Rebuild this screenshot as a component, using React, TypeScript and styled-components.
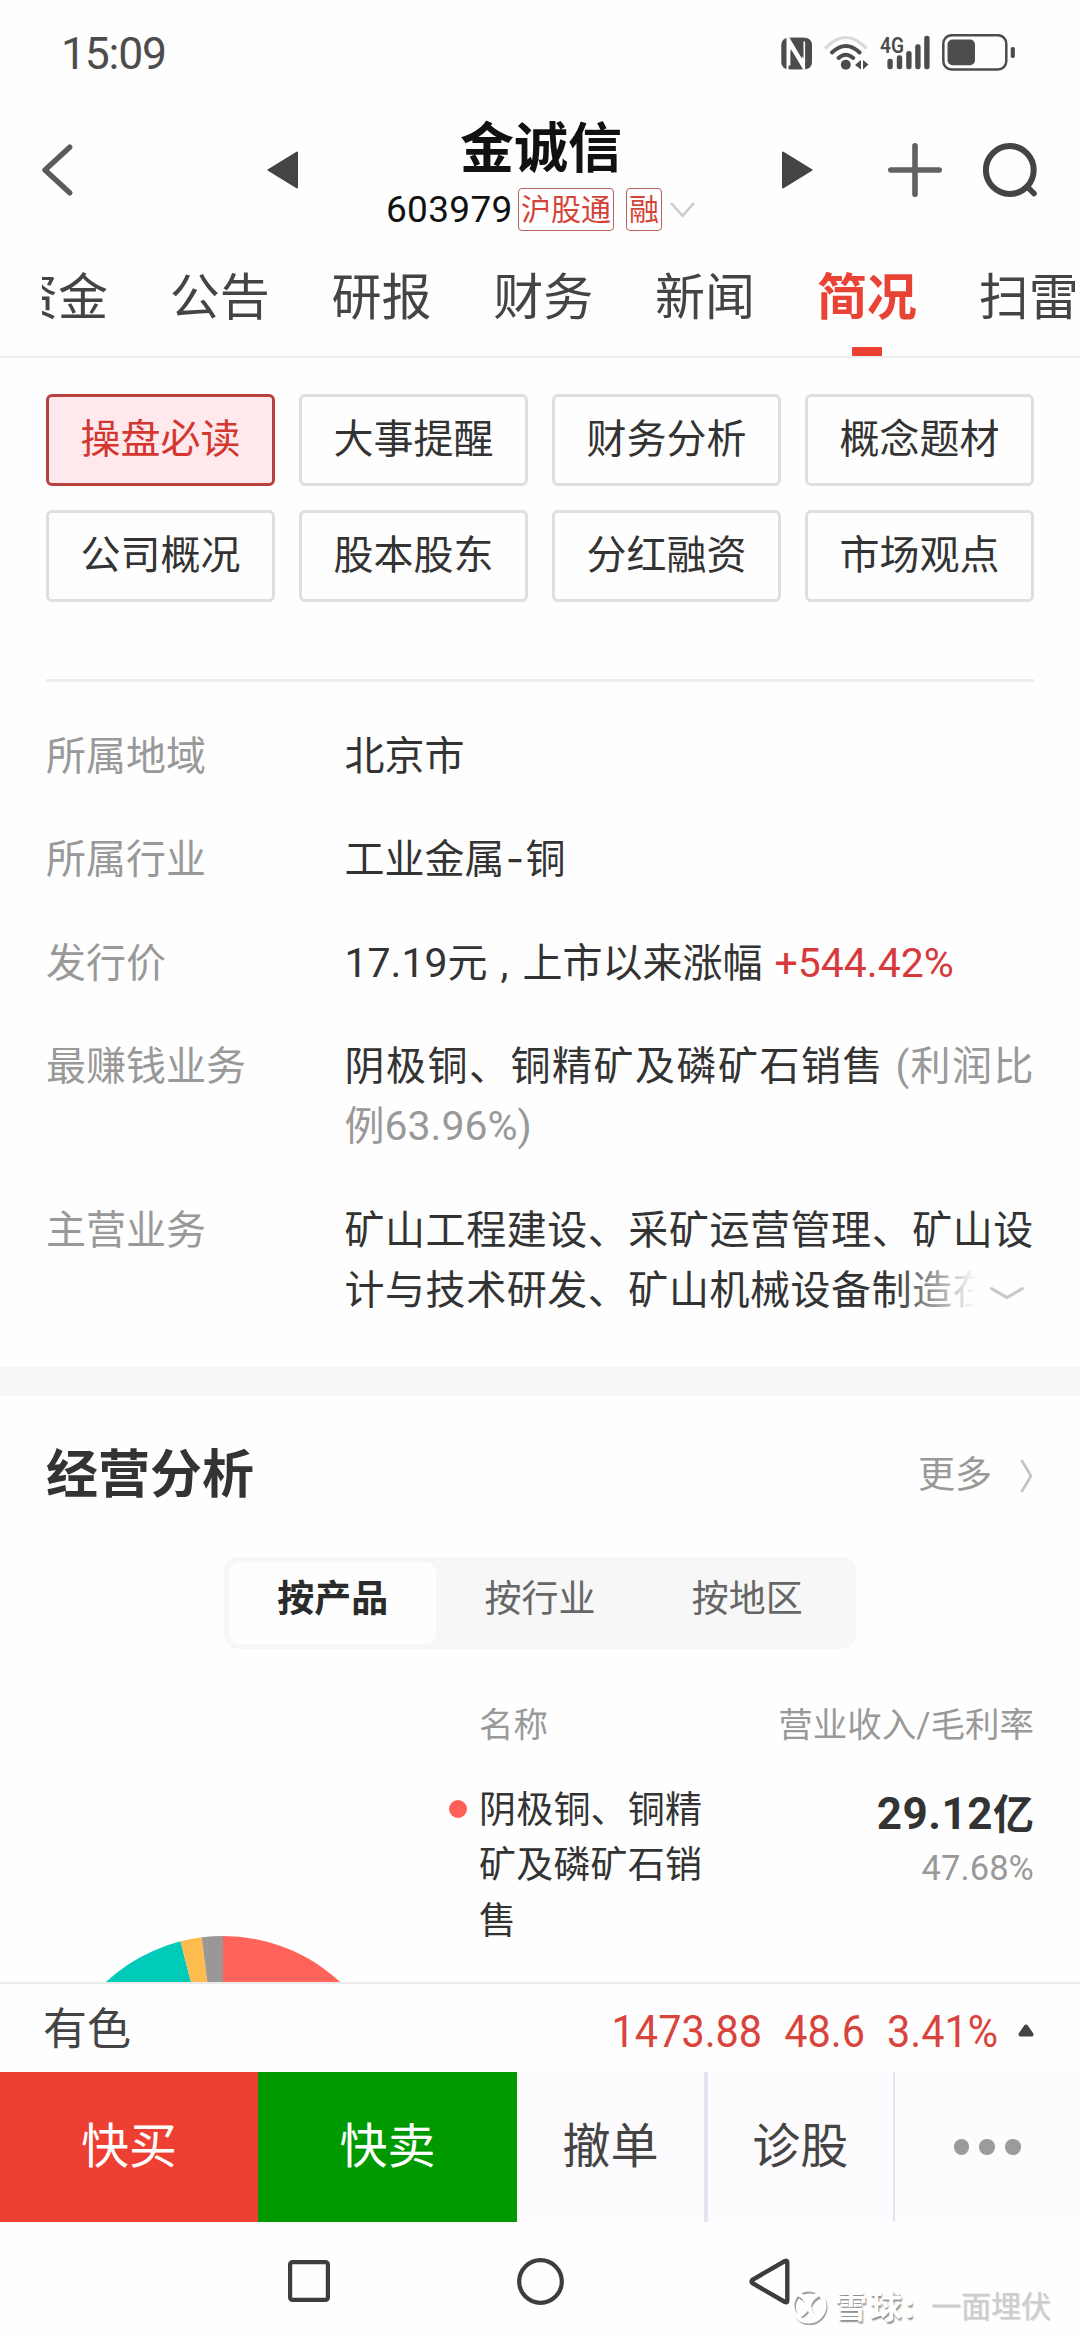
import React from "react";
import styled, { createGlobalStyle } from "styled-components";

const GlobalStyle = createGlobalStyle`
  * { box-sizing: border-box; }
  body {
    margin: 0;
    background: #fefefe;
    font-family: Roboto, "Noto Sans CJK SC", sans-serif;
    color: #333;
  }
  svg { display: block; flex: none; }
`;

const Screen = styled.div`
  width: 1080px;
  height: 2340px;
  display: flex;
  flex-direction: column;
  overflow: hidden;
  background: #fefefe;
`;

/* status bar */
const StatusBar = styled.div`
  height: 107px;
  flex: none;
  display: flex;
  align-items: center;
  justify-content: space-between;
  padding: 0 65px 0 61px;
`;
const Clock = styled.div`
  font-size: 44.5px;
  line-height: 50px;
  letter-spacing: -1.2px;
  color: #4c4c4c;
`;

/* header */
const Header = styled.header`
  height: 126px;
  flex: none;
  display: flex;
  align-items: center;
  padding-left: 42px;
`;
const IconButton = styled.div<{ $before?: number }>`
  flex: none;
  margin-left: ${(p) => p.$before ?? 0}px;
`;
const Quote = styled.div`
  align-self: flex-start;
  width: 310px;
  margin-left: 88px;
  padding-top: 10px;
`;
const StockName = styled.h1`
  margin: 0;
  text-align: center;
  font-size: 54px;
  font-weight: 700;
  line-height: 66px;
  color: #111;
`;
const CodeRow = styled.div`
  display: flex;
  align-items: center;
  height: 43px;
  margin-top: 5px;
`;
const Code = styled.span`
  width: 132px;
  font-size: 37px;
  line-height: 43px;
  letter-spacing: 0.3px;
  color: #111;
  white-space: nowrap;
`;
const Badge = styled.span<{ $width: number }>`
  width: ${(p) => p.$width}px;
  height: 43px;
  margin-right: 12px;
  border: 1.5px solid #b8605c;
  border-radius: 4px;
  font-size: 30px;
  line-height: 41px;
  text-align: center;
  white-space: nowrap;
  color: #d5443b;
`;
const BadgeChevron = styled.svg`
  margin-left: -4px;
`;

/* tabs */
const Tabs = styled.nav`
  flex: none;
  height: 125px;
  padding-left: 42px;
  border-bottom: 2px solid #eeeeee;
`;
const TabTrack = styled.div`
  display: flex;
  height: 123px;
  overflow: hidden;
`;
const Tab = styled.div<{ $active?: boolean; $first?: boolean }>`
  flex: none;
  width: 161.8px;
  margin-left: ${(p) => (p.$first ? -65 : 0)}px;
  padding-top: 35px;
  display: flex;
  flex-direction: column;
  align-items: center;
  justify-content: space-between;
  font-size: 50px;
  line-height: 60px;
  font-weight: ${(p) => (p.$active ? 700 : 400)};
  color: ${(p) => (p.$active ? "#e94335" : "#444")};
`;
const Indicator = styled.i`
  width: 30px;
  height: 9px;
  border-radius: 1px;
  background: #ec4034;
`;

/* profile section */
const Profile = styled.section`
  flex: none;
  padding: 36px 46px 46px;
`;
const ChipGrid = styled.div`
  display: grid;
  grid-template-columns: repeat(4, 229px);
  grid-auto-rows: 92px;
  gap: 24px;
`;
const Chip = styled.div<{ $active?: boolean }>`
  display: flex;
  justify-content: center;
  align-items: center;
  border: 3px solid ${(p) => (p.$active ? "#b8413f" : "#dfdfdf")};
  border-radius: 6px;
  background: ${(p) => (p.$active ? "#ffe9ed" : "#fefefe")};
  font-size: 40px;
  line-height: 60px;
  color: ${(p) => (p.$active ? "#d4372f" : "#333")};
`;
const Divider = styled.hr`
  height: 3px;
  margin: 77px 0 45px;
  border: 0;
  background: #ededed;
`;
const InfoList = styled.dl`
  margin: 0;
  display: flex;
  flex-direction: column;
  gap: 43.4px;
`;
const InfoRow = styled.div`
  display: flex;
  font-size: 40px;
  line-height: 60px;
`;
const Term = styled.dt`
  flex: none;
  width: 298.5px;
  color: #999;
`;
const Detail = styled.dd`
  position: relative;
  flex: 1;
  margin: 0;
  white-space: nowrap;
`;
const Line = styled.div<{ $tracking?: number }>`
  height: 60px;
  letter-spacing: ${(p) => p.$tracking ?? 0}px;
`;
const Num = styled.span`
  font-size: 41px;
  line-height: 1;
`;
const Dash = styled.span`
  display: inline-block;
  width: 21px;
  line-height: 1;
  text-align: center;
  font-family: Inter, sans-serif;
`;
const Comma = styled.span`
  display: inline-block;
  width: 35px;
  line-height: 1;
  text-indent: 13px;
`;
const Rise = styled(Num)`
  margin-left: 12px;
  color: #d8393c;
`;
const Muted = styled.span`
  color: #999;
`;
const Fade = styled.div`
  position: absolute;
  right: 0;
  bottom: 0;
  width: 142px;
  height: 60px;
  padding: 26px 10px 0 98px;
  background: linear-gradient(90deg, rgba(254, 254, 254, 0) 0, #fefefe 84px);
`;

const Band = styled.div`
  flex: none;
  height: 29px;
  background: #f7f7f7;
`;

/* business analysis */
const Analysis = styled.section`
  flex: 1;
  min-height: 0;
  overflow: hidden;
  padding: 50px 46px 0;
`;
const SectionHead = styled.div`
  display: flex;
  align-items: center;
  justify-content: space-between;
  height: 60px;
`;
const SectionTitle = styled.h2`
  margin: 0;
  font-size: 52px;
  line-height: 60px;
  font-weight: 700;
  color: #333;
`;
const More = styled.div`
  display: flex;
  align-items: center;
  gap: 28px;
  padding-right: 1px;
  font-size: 37px;
  line-height: 56px;
  color: #999;
`;
const Segmented = styled.div`
  display: grid;
  grid-template-columns: repeat(3, 1fr);
  width: 632px;
  height: 92px;
  margin: 51px auto 0;
  padding: 5px;
  border-radius: 14px;
  background: #f7f7f7;
`;
const Segment = styled.div<{ $active?: boolean }>`
  display: flex;
  justify-content: center;
  align-items: center;
  padding-bottom: 5px;
  border-radius: 11px;
  background: ${(p) => (p.$active ? "#fefefe" : "transparent")};
  font-size: 37px;
  line-height: 56px;
  font-weight: ${(p) => (p.$active ? 700 : 400)};
  color: ${(p) => (p.$active ? "#2b2b2b" : "#666")};
`;
const Breakdown = styled.div`
  display: flex;
`;
const PieColumn = styled.div`
  flex: none;
  width: 403px;
  padding: 287px 0 0 5px;
`;
const Table = styled.div`
  flex: 1;
  padding-top: 53px;
`;
const TableHead = styled.div`
  display: flex;
  justify-content: space-between;
  padding-left: 30px;
  font-size: 34.5px;
  line-height: 46px;
  color: #999;
`;
const TableRow = styled.div`
  display: flex;
  margin-top: 35px;
`;
const Dot = styled.i`
  flex: none;
  width: 18px;
  height: 18px;
  margin: 17px 12px 0 0;
  border-radius: 50%;
  background: #fe6058;
`;
const ProductName = styled.div`
  width: 226px;
  font-size: 37px;
  line-height: 55.7px;
  letter-spacing: 0.2px;
  color: #333;
`;
const Figures = styled.div`
  margin: 7px 0 0 auto;
  text-align: right;
`;
const Revenue = styled.div`
  height: 48px;
  font-size: 44px;
  line-height: 48px;
  letter-spacing: 0.5px;
  font-weight: 700;
  color: #333;
`;
const Unit = styled.span`
  font-size: 41px;
  line-height: 1;
  letter-spacing: 0;
`;
const Margin = styled.div`
  margin-top: 12px;
  font-size: 34.5px;
  line-height: 36px;
  letter-spacing: 0.1px;
  color: #999;
`;

/* index ticker */
const Ticker = styled.div`
  flex: none;
  display: flex;
  align-items: center;
  height: 90px;
  padding: 4px 46px 0 43px;
  border-top: 2px solid #ebebeb;
  color: #444;
`;
const TickerName = styled.div`
  font-size: 44px;
  line-height: 60px;
`;
const TickerValues = styled.div`
  display: flex;
  gap: 24px;
  margin: 3px 20px 0 auto;
  font-size: 45px;
  line-height: 60px;
  color: #d8443c;
  transform: scaleX(0.92);
  transform-origin: right center;
`;

/* trade bar */
const TradeBar = styled.div`
  flex: none;
  display: grid;
  grid-template-columns: 258px 259px 191px 186.5px 1fr;
  height: 150px;
  background: #fdfbfd;
`;
const TradeButton = styled.div<{ $bg?: string; $rule?: number }>`
  display: flex;
  justify-content: center;
  align-items: center;
  border-right: ${(p) => p.$rule ?? 0}px solid #e3e4ee;
  background: ${(p) => p.$bg ?? "transparent"};
  font-size: 48px;
  line-height: 60px;
  color: ${(p) => (p.$bg ? "#fff" : "#444")};
`;
const MoreDots = styled.div`
  display: flex;
  align-items: center;
  gap: 10.5px;
  padding-left: 59px;
`;
const MoreDot = styled.i`
  width: 15.4px;
  height: 15.4px;
  border-radius: 50%;
  background: #9b9b9b;
`;

/* system navigation */
const NavBar = styled.div`
  position: relative;
  flex: none;
  display: flex;
  align-items: center;
  height: 118px;
  padding-left: 288px;
`;
const NavKey = styled.div<{ $before?: number }>`
  margin-left: ${(p) => p.$before ?? 0}px;
`;
const Watermark = styled.div`
  position: absolute;
  left: 789px;
  top: 63px;
  height: 44px;
  display: flex;
  align-items: center;
  white-space: nowrap;
`;
const Brand = styled.span`
  width: 96px;
  margin-left: 6px;
  font-size: 32px;
  line-height: 44px;
  letter-spacing: 3px;
  font-weight: 700;
  color: #fff;
  text-shadow: 1px 1.5px 1.5px rgba(0, 0, 0, 0.45);
`;
const Author = styled.span`
  font-size: 30px;
  line-height: 44px;
  font-weight: 400;
  color: #cdcdcd;
  text-shadow: 1px 1px 1px rgba(0, 0, 0, 0.15);
`;

const StatusIcons = () => (
  <svg width="235" height="40" viewBox="780 33 235 40" fill="#4c4c4c">
    <rect x="781.3" y="36.7" width="30.7" height="31.6" rx="7" />
    <path
      d="M789.5 64.5 V41.5 L803.5 63.5 V40.5"
      fill="none"
      stroke="#fff"
      strokeWidth="3.2"
    />
    <path d="M786.5 36.7 L789.5 36.7 L805 63 L805 68.3 L803 68.3 L788.5 44 L788.5 68.3 L786.5 68.3 Z" fill="#fff" />
    <path d="M791 36.7 L803.5 57.5 L803.5 36.7 Z" />
    <path d="M790.4 68.3 L790.4 49 L802 68.3 Z" />
    <g fill="none" strokeLinecap="round">
      <path d="M826 46.5 Q845.8 26.5 865.6 46.5" stroke="#d9d9d9" strokeWidth="3.2" />
      <path d="M832 51.5 Q845.8 38.5 859.6 51.5" stroke="#4c4c4c" strokeWidth="4" />
      <path d="M838.5 57 Q845.8 50.5 853.2 57" stroke="#4c4c4c" strokeWidth="4" />
    </g>
    <circle cx="845.8" cy="63.7" r="5" />
    <path d="M855 64 L861 59 V68.5 Z M863 59 V68.5 L868.5 63.5 Z" />
    <text
      x="880"
      y="51.5"
      fontSize="22"
      fontWeight="600"
      textLength="24"
      lengthAdjust="spacingAndGlyphs"
      fontFamily="Roboto, sans-serif"
    >
      4G
    </text>
    <rect x="887.4" y="57.7" width="5.4" height="10.6" rx="2.4" />
    <rect x="896.8" y="54.3" width="5.4" height="14" rx="2.4" />
    <rect x="906.2" y="50" width="5.4" height="18.3" rx="2.4" />
    <rect x="915.2" y="43.3" width="5.4" height="25" rx="2.4" />
    <rect x="924.2" y="34.7" width="5.4" height="33.6" rx="2.4" />
    <rect x="943.3" y="34.2" width="63" height="34.3" rx="8.5" fill="none" stroke="#4c4c4c" strokeWidth="2.5" />
    <rect x="947.5" y="38.5" width="27.5" height="25.7" rx="5" />
    <rect x="1010.7" y="46" width="4.2" height="11" rx="1.8" />
  </svg>
);

const CHIPS = ["操盘必读", "大事提醒", "财务分析", "概念题材", "公司概况", "股本股东", "分红融资", "市场观点"];
const TABS = ["资金", "公告", "研报", "财务", "新闻", "简况", "扫雷"];

// Slice boundaries in degrees, clockwise from twelve o'clock.
const SLICES = [
  { from: 0, to: 190, color: "#ff6359" },
  { from: 190, to: 345.7, color: "#00cbb8" },
  { from: 345.7, to: 352.9, color: "#ffbc4e" },
  { from: 352.9, to: 360, color: "#999797" },
];

const PIE_R = 172;
const pointAt = (deg: number) => {
  const a = (deg * Math.PI) / 180;
  return `${PIE_R + PIE_R * Math.sin(a)} ${PIE_R - PIE_R * Math.cos(a)}`;
};

const Pie = () => (
  <svg width={PIE_R * 2} height={PIE_R * 2}>
    {SLICES.map((s) => (
      <path
        key={s.color}
        fill={s.color}
        d={`M${PIE_R} ${PIE_R} L${pointAt(s.from)} A${PIE_R} ${PIE_R} 0 ${s.to - s.from > 180 ? 1 : 0} 1 ${pointAt(s.to)} Z`}
      />
    ))}
  </svg>
);

export default function App() {
  return (
    <>
      <GlobalStyle />
      <Screen>
        <StatusBar>
          <Clock>15:09</Clock>
          <StatusIcons />
        </StatusBar>

        <Header>
          <IconButton>
            <svg width="31" height="52" fill="none" stroke="#5b5b5b" strokeWidth="5.4" strokeLinecap="round" strokeLinejoin="round">
              <path d="M27.7 3.2 L3 26 L27.7 48.8" />
            </svg>
          </IconButton>
          <IconButton $before={194}>
            <svg width="31" height="38" fill="#444" stroke="#444" strokeWidth="2" strokeLinejoin="round">
              <path d="M1.5 19 L30 1.5 V36.5 Z" />
            </svg>
          </IconButton>
          <Quote>
            <StockName>金诚信</StockName>
            <CodeRow>
              <Code>603979</Code>
              <Badge $width={96}>沪股通</Badge>
              <Badge $width={36}>融</Badge>
              <BadgeChevron width="25" height="16" fill="none" stroke="#cccccc" strokeWidth="2.6">
                <path d="M1 1 L12.5 13.8 L24 1" />
              </BadgeChevron>
            </CodeRow>
          </Quote>
          <IconButton $before={86}>
            <svg width="31" height="38" fill="#444" stroke="#444" strokeWidth="2" strokeLinejoin="round">
              <path d="M29.5 19 L1 1.5 V36.5 Z" />
            </svg>
          </IconButton>
          <IconButton $before={75}>
            <svg width="54" height="54" stroke="#626262" strokeWidth="5.6" strokeLinecap="round">
              <path d="M27 2.8 V51.2 M2.8 27 H51.2" />
            </svg>
          </IconButton>
          <IconButton $before={41}>
            <svg width="55" height="54" fill="none" stroke="#444" strokeWidth="6">
              <circle cx="26.8" cy="27" r="23.9" />
              <path d="M45 44.5 L51 50.5" strokeLinecap="round" strokeWidth="5.5" />
            </svg>
          </IconButton>
        </Header>

        <Tabs>
          <TabTrack>
            {TABS.map((t, i) => (
              <Tab key={t} $first={i === 0} $active={t === "简况"}>
                {t}
                {t === "简况" && <Indicator />}
              </Tab>
            ))}
          </TabTrack>
        </Tabs>

        <Profile>
          <ChipGrid>
            {CHIPS.map((c, i) => (
              <Chip key={c} $active={i === 0}>
                {c}
              </Chip>
            ))}
          </ChipGrid>
          <Divider />
          <InfoList>
            <InfoRow>
              <Term>所属地域</Term>
              <Detail>
                <Line>北京市</Line>
              </Detail>
            </InfoRow>
            <InfoRow>
              <Term>所属行业</Term>
              <Detail>
                <Line>
                  工业金属<Dash>-</Dash>铜
                </Line>
              </Detail>
            </InfoRow>
            <InfoRow>
              <Term>发行价</Term>
              <Detail>
                <Line>
                  <Num>17.19</Num>元<Comma>,</Comma>上市以来涨幅<Rise>+544.42%</Rise>
                </Line>
              </Detail>
            </InfoRow>
            <InfoRow>
              <Term>最赚钱业务</Term>
              <Detail>
                <Line $tracking={1.5}>
                  阴极铜、铜精矿及磷矿石销售 <Muted>(利润比</Muted>
                </Line>
                <Line>
                  <Muted>
                    例<Num>63.96%)</Num>
                  </Muted>
                </Line>
              </Detail>
            </InfoRow>
            <InfoRow>
              <Term>主营业务</Term>
              <Detail>
                <Line $tracking={0.55}>矿山工程建设、采矿运营管理、矿山设</Line>
                <Line $tracking={0.55}>计与技术研发、矿山机械设备制造在</Line>
                <Fade>
                  <svg width="34" height="13" fill="none" stroke="#c9c9c9" strokeWidth="3" strokeLinecap="round" strokeLinejoin="round">
                    <path d="M1.6 1.6 L17 10.6 L32.4 1.6" />
                  </svg>
                </Fade>
              </Detail>
            </InfoRow>
          </InfoList>
        </Profile>

        <Band />

        <Analysis>
          <SectionHead>
            <SectionTitle>经营分析</SectionTitle>
            <More>
              更多
              <svg width="13" height="34" fill="none" stroke="#c2c2c2" strokeWidth="2.6">
                <path d="M1.5 1 L11 17 L1.5 33" />
              </svg>
            </More>
          </SectionHead>
          <Segmented>
            <Segment $active>按产品</Segment>
            <Segment>按行业</Segment>
            <Segment>按地区</Segment>
          </Segmented>
          <Breakdown>
            <PieColumn>
              <Pie />
            </PieColumn>
            <Table>
              <TableHead>
                <span>名称</span>
                <span>营业收入/毛利率</span>
              </TableHead>
              <TableRow>
                <Dot />
                <ProductName>阴极铜、铜精矿及磷矿石销售</ProductName>
                <Figures>
                  <Revenue>
                    29.12<Unit>亿</Unit>
                  </Revenue>
                  <Margin>47.68%</Margin>
                </Figures>
              </TableRow>
            </Table>
          </Breakdown>
        </Analysis>

        <Ticker>
          <TickerName>有色</TickerName>
          <TickerValues>
            <span>1473.88</span>
            <span>48.6</span>
            <span>3.41%</span>
          </TickerValues>
          <svg width="16" height="13" fill="#444" stroke="#444" strokeWidth="4" strokeLinejoin="round">
            <path d="M8 2.5 L13.5 10.5 H2.5 Z" />
          </svg>
        </Ticker>

        <TradeBar>
          <TradeButton $bg="#ed4033">快买</TradeButton>
          <TradeButton $bg="#009a00">快卖</TradeButton>
          <TradeButton $rule={4}>撤单</TradeButton>
          <TradeButton $rule={2}>诊股</TradeButton>
          <MoreDots>
            <MoreDot />
            <MoreDot />
            <MoreDot />
          </MoreDots>
        </TradeBar>

        <NavBar>
          <NavKey>
            <svg width="42" height="42" fill="none" stroke="#3d3d3d" strokeWidth="4.2">
              <rect x="2.1" y="2.1" width="37.8" height="37.8" rx="2.5" />
            </svg>
          </NavKey>
          <NavKey $before={186.5}>
            <svg width="47" height="47" fill="none" stroke="#3d3d3d" strokeWidth="4.2">
              <circle cx="23.5" cy="23.5" r="21.3" />
            </svg>
          </NavKey>
          <NavKey $before={185}>
            <svg width="41" height="47" fill="none" stroke="#3d3d3d" strokeWidth="4.4" strokeLinejoin="round">
              <path d="M3.2 22 Q2 23.5 3.2 25 L36 44 Q38.3 45 38.3 42.5 V4.5 Q38.3 2 36 3 Z" />
            </svg>
          </NavKey>
          <Watermark>
            <svg width="40" height="44" fill="none" strokeLinecap="round">
              <g stroke="#a0a0a0" strokeWidth="4" transform="translate(1.2 1.8)">
                <circle cx="19.5" cy="20.5" r="15.8" />
                <path d="M11 11 C17 13 17 18 19.5 21 C22 25 21 29 25 32 M28 11 C22 14 21 18 19.5 21 C17 26 15 28 11 30" />
              </g>
              <g stroke="#fff" strokeWidth="4">
                <circle cx="19.5" cy="20.5" r="16" />
                <path d="M11 10 C17 12 17 17 19.5 21 C22 25 21 29 25 32 M28 10 C22 13 21 17 19.5 21 C17 25 15 28 11 30" strokeWidth="4.4" />
              </g>
            </svg>
            <Brand>雪球:</Brand>
            <Author>一面埋伏</Author>
          </Watermark>
        </NavBar>
      </Screen>
    </>
  );
}
